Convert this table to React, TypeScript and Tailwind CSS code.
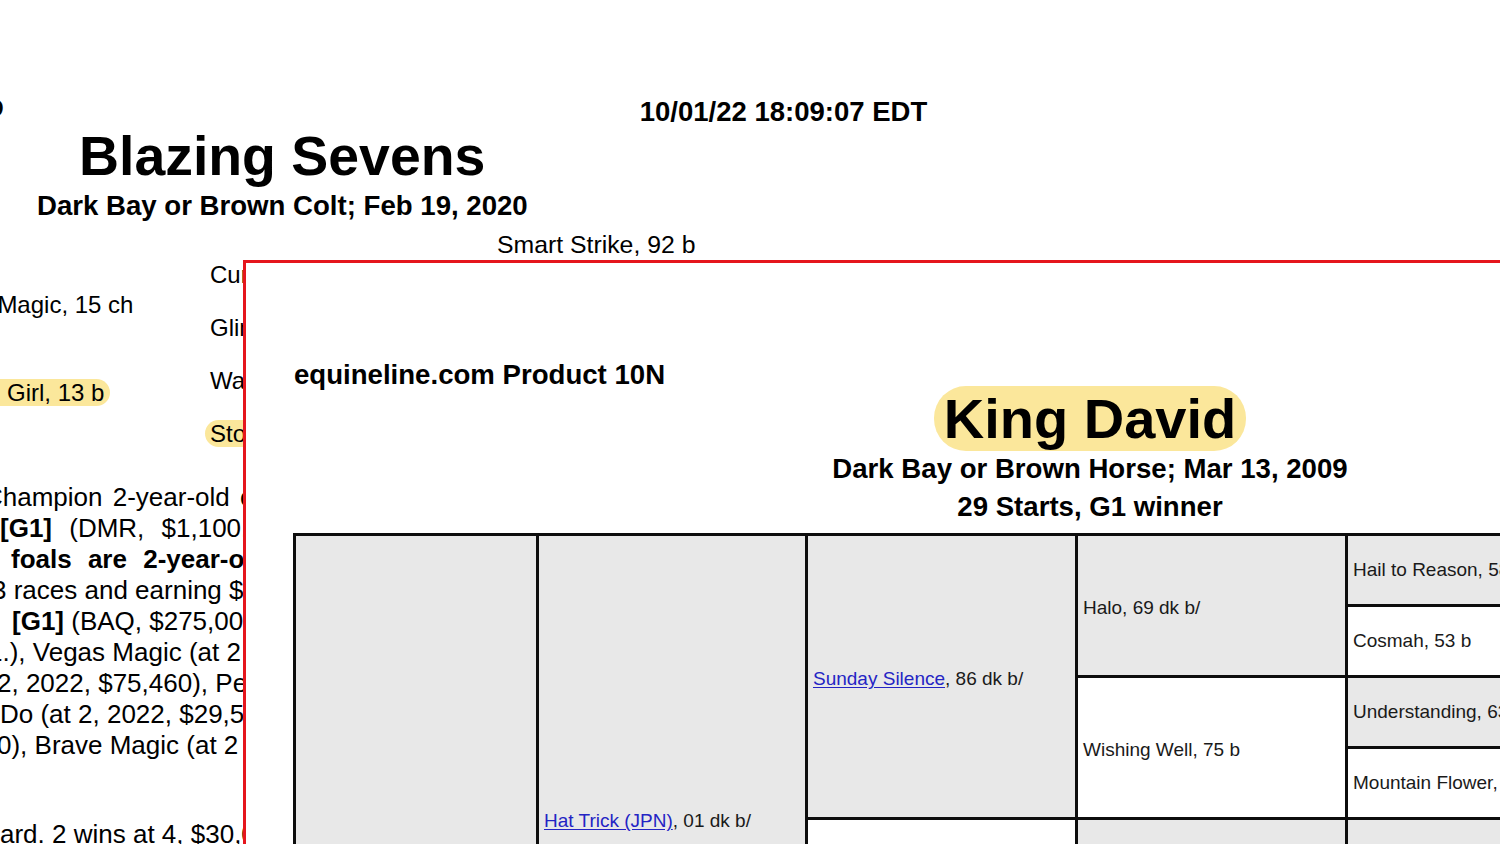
const FONT = { fontFamily: '"Liberation Sans", Arial, Helvetica, sans-serif' }

type Cell = { name: string; link?: boolean; gray: boolean; span: 'row-span-8' | 'row-span-4' | 'row-span-2' | 'row-span-1'; col: number }

// pedigree cells in document order (grid auto-placement fills rows left to right)
const CELLS: Cell[] = [
  { name: '', gray: true, span: 'row-span-8', col: 1 },
  { name: 'Hat Trick (JPN)|, 01 dk b/', link: true, gray: true, span: 'row-span-8', col: 2 },
  { name: 'Sunday Silence|, 86 dk b/', link: true, gray: true, span: 'row-span-4', col: 3 },
  { name: 'Halo, 69 dk b/', gray: true, span: 'row-span-2', col: 4 },
  { name: 'Hail to Reason, 58 br', gray: true, span: 'row-span-1', col: 5 },
  { name: 'Cosmah, 53 b', gray: false, span: 'row-span-1', col: 5 },
  { name: 'Wishing Well, 75 b', gray: false, span: 'row-span-2', col: 4 },
  { name: 'Understanding, 63 ch', gray: true, span: 'row-span-1', col: 5 },
  { name: 'Mountain Flower, 64 b', gray: false, span: 'row-span-1', col: 5 },
  { name: 'Tricky Code, 97 dk b/', gray: false, span: 'row-span-4', col: 3 },
  { name: 'Lost Code, 84 dk b/', gray: true, span: 'row-span-2', col: 4 },
  { name: 'Codex, 77 ch', gray: true, span: 'row-span-1', col: 5 },
  { name: 'Loss an Eye, 74 ch', gray: false, span: 'row-span-1', col: 5 },
  { name: 'Tricky Bird, 86 b', gray: false, span: 'row-span-2', col: 4 },
  { name: 'Storm Bird, 78 b', gray: true, span: 'row-span-1', col: 5 },
  { name: 'Tricky Squaw, 76 b', gray: false, span: 'row-span-1', col: 5 },
]

function PedCell({ c }: { c: Cell }) {
  const [label, rest] = c.name.split('|')
  const big = c.span !== 'row-span-1'
  return (
    <div
      className={`${c.span} flex items-center border-l-[3px] border-t-[3px] border-[#0d0d0d] pl-[5px] ${
        big ? 'pt-[5px]' : 'pt-[1px]'
      } text-[19px] text-[#1a1a1a] whitespace-nowrap overflow-hidden ${c.gray ? 'bg-[#e8e8e8]' : 'bg-white'}`}
    >
      {c.link ? (
        <span>
          <span className="text-[#2424c4] underline underline-offset-[2px]">{label}</span>
          {rest}
        </span>
      ) : (
        label
      )}
    </div>
  )
}

function KingDavidCard() {
  return (
    <div className="absolute left-[243px] top-[260px] z-10 w-[1700px] h-[700px] bg-white border-l-[3px] border-t-[3px] border-[#e5161d]">
      <div className="pl-[47px] pt-[101px]">
        <div className="w-[1594px]">
          <div className="pl-[1px] text-[27.6px] leading-[22px] font-bold text-black">equineline.com Product 10N</div>
          <div className="text-center">
            <span className="inline-block bg-[#fbe79b] rounded-[32px] px-[10px] text-[56px] leading-[65px] font-bold text-black">
              King David
            </span>
          </div>
          <div className="-mt-[1px] text-center text-[27.6px] leading-[38px] font-bold text-black">Dark Bay or Brown Horse; Mar 13, 2009</div>
          <div className="text-center text-[27.6px] leading-[38px] font-bold text-black">29 Starts, G1 winner</div>
          <div className="mt-[7px] grid grid-cols-[243px_269px_270px_270px_540px] grid-rows-[repeat(8,71px)] border-r-[3px] border-b-[3px] border-[#0d0d0d]">
            {CELLS.map((c, i) => (
              <PedCell key={i} c={c} />
            ))}
          </div>
        </div>
      </div>
    </div>
  )
}

export default function App() {
  return (
    <div style={FONT} className="relative w-[1500px] h-[844px] overflow-hidden bg-white text-black">
      {/* background report, mostly covered by the card */}
      <div className="pt-[96px]">
        <div className="flex items-start h-[32px]">
          <span className="-ml-[15px] text-[26px] leading-[24px] font-bold">D</span>
          <span className="ml-[636px] text-[27.5px] leading-[32px] font-bold">10/01/22 18:09:07 EDT</span>
        </div>
        <div className="-mt-[3px] pl-[79px] text-[55.4px] leading-[62px] font-bold">Blazing Sevens</div>
        <div className="mt-[3px] pl-[37px] text-[27.6px] leading-[32px] font-bold">Dark Bay or Brown Colt; Feb 19, 2020</div>
        <div className="mt-[9px] pl-[497px] text-[24.8px] leading-[28px]">Smart Strike, 92 b</div>

        <div className="flex text-[24px] leading-[30px] whitespace-nowrap">
          <div className="w-[205px] pt-[31px] flex flex-col gap-[58px]">
            <div className="-ml-[68px]">Good Magic, 15 ch</div>
            <div className="-ml-[33px]">
              <span className="bg-[#fbe79b] rounded-r-[14px] pr-[6px]">Mo Girl, 13 b</span>
            </div>
          </div>
          <div className="pt-[1px] flex flex-col gap-[23px]">
            <div className="pl-[5px]">Curlin, 04 ch</div>
            <div className="pl-[5px]">Glinda the Good, 03 ch</div>
            <div className="pl-[5px]">War Front, 02 b</div>
            <div>
              <span className="bg-[#fbe79b] rounded-l-[14px] px-[5px]">Stormy Girl, 05 b</span>
            </div>
          </div>
        </div>

        <div className="mt-[33px] text-[26px] leading-[31px] whitespace-nowrap">
          <div className="-ml-[16px] [word-spacing:3px]">Champion 2-year-old colt</div>
          <div className="[word-spacing:10px]">
            <b>[G1]</b> (DMR, $1,100,000)
          </div>
          <div className="pl-[11px] font-bold [word-spacing:9px]">foals are 2-year-olds</div>
          <div className="-ml-[8px]">3 races and earning $1</div>
          <div className="pl-[12px]">
            <b>[G1]</b> (BAQ, $275,000)
          </div>
          <div className="-ml-[12px]">1.), Vegas Magic (at 2</div>
          <div className="-ml-[3px]">2, 2022, $75,460), Perfect</div>
          <div>Do (at 2, 2022, $29,510)</div>
          <div className="-ml-[3px]">0), Brave Magic (at 2</div>
          <div className="mt-[58px]">ard. 2 wins at 4, $30,000</div>
        </div>
      </div>

      <KingDavidCard />
    </div>
  )
}
